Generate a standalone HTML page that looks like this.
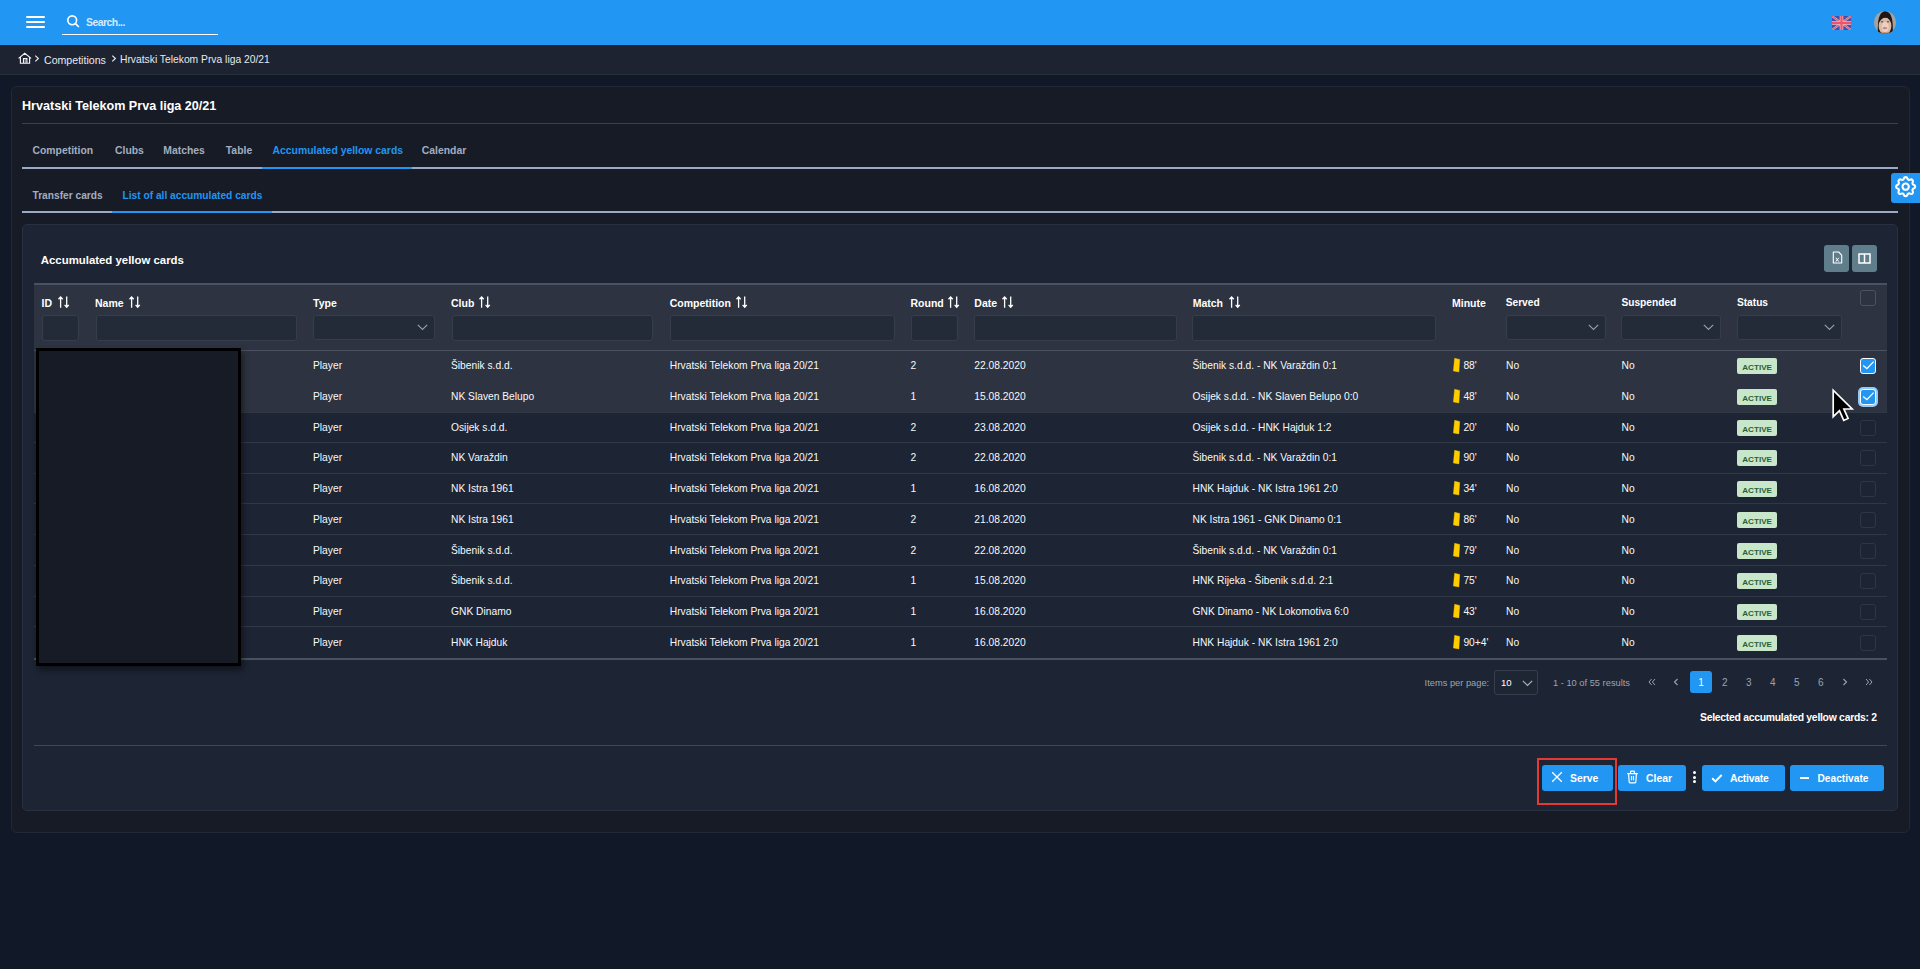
<!DOCTYPE html><html><head><meta charset="utf-8"><style>
*{box-sizing:border-box;margin:0;padding:0}
html,body{width:1920px;height:969px;overflow:hidden}
body{background:#111827;font-family:"Liberation Sans",sans-serif;color:#f1f3f6;position:relative}
.a{position:absolute}
.t{position:absolute;white-space:nowrap;line-height:1}
svg{position:absolute;overflow:visible}
</style></head><body>
<div class="a" style="left:0px;top:0px;width:1920px;height:45px;background:#2196f3"></div>
<div class="a" style="left:26px;top:16px;width:18.7px;height:2.2px;background:#fff;border-radius:1.1px"></div>
<div class="a" style="left:26px;top:21px;width:18.7px;height:2.2px;background:#fff;border-radius:1.1px"></div>
<div class="a" style="left:26px;top:26px;width:18.7px;height:2.2px;background:#fff;border-radius:1.1px"></div>
<svg style="left:66px;top:14px" width="14" height="14" viewBox="0 0 14 14"><circle cx="6.2" cy="6.3" r="4.4" fill="none" stroke="#fff" stroke-width="1.65"/><line x1="9.5" y1="9.6" x2="12.4" y2="12.5" stroke="#fff" stroke-width="1.7" stroke-linecap="round"/></svg>
<div class="t" style="left:86px;top:17.50px;font-size:10.4px;font-weight:bold;color:rgba(255,255,255,0.82);letter-spacing:-0.5px;">Search...</div>
<div class="a" style="left:62px;top:33.8px;width:156px;height:1.3px;background:#fff"></div>
<svg style="left:1832px;top:15.5px;overflow:hidden" width="19" height="14" viewBox="0 0 60 44" preserveAspectRatio="none">
<rect width="60" height="44" fill="#4350a8"/>
<path d="M0,0 L60,44 M60,0 L0,44" stroke="#d9d4e6" stroke-width="6"/>
<path d="M0,0 L60,44 M60,0 L0,44" stroke="#e5566c" stroke-width="3.5"/>
<path d="M30,0 V44 M0,22 H60" stroke="#e8e4ee" stroke-width="11"/>
<path d="M30,0 V44 M0,22 H60" stroke="#ef5466" stroke-width="7.5"/>
</svg>
<svg style="left:1874px;top:11px" width="22" height="23" viewBox="0 0 22 23">
<defs><clipPath id="av"><ellipse cx="11" cy="11.5" rx="10.9" ry="11.5"/></clipPath><filter id="bl" x="-10%" y="-10%" width="120%" height="120%"><feGaussianBlur stdDeviation="0.5"/></filter></defs>
<g clip-path="url(#av)"><g filter="url(#bl)">
<rect x="-2" y="-2" width="26" height="27" fill="#a4a29d"/>
<path d="M3.8,24 C3.6,12 4,1 11,0.2 C18,0.5 19.2,9 18.8,24 Z" fill="#1f1815"/>
<ellipse cx="11" cy="15" rx="6.4" ry="8.4" fill="#dcb9a4"/>
<ellipse cx="11.2" cy="16" rx="3.5" ry="5" fill="#ead2c2"/>
<path d="M4.6,12 C4.6,4 17.4,3.5 17.6,11.5 C16.5,9 14.5,6.2 11.5,6.6 C8.4,6.8 6.2,9.5 4.6,12 Z" fill="#1f1815"/>
<ellipse cx="8" cy="10.8" rx="1.2" ry="0.7" fill="#6a4a3a"/>
<ellipse cx="14" cy="10.8" rx="1.2" ry="0.7" fill="#6a4a3a"/>
<ellipse cx="10.9" cy="17.2" rx="2.4" ry="1.1" fill="#c98883"/>
<rect x="4" y="21.6" width="14" height="3" fill="#b0603a"/>
</g></g></svg>
<div class="a" style="left:0px;top:45px;width:1920px;height:30px;background:#1d2331;border-bottom:1px solid #262d3b"></div>
<svg style="left:14px;top:48px" width="20" height="20" viewBox="14 48 20 20"><path d="M18.6,58.4 L24.75,53.3 L31.1,58.4 M20.4,57.2 V63.2 H29.6 V57.2 M23.5,63.2 V58.6 H26.9 V63.2" fill="none" stroke="#f2f4f7" stroke-width="1.15" stroke-linejoin="miter"/><path d="M25.2,59.5 V63" stroke="#f2f4f7" stroke-width="0.7"/></svg>
<svg style="left:34px;top:54px" width="6" height="8" viewBox="0 0 6 8"><path d="M1.3,1.6 L4.4,4.5 L1.3,7.4" fill="none" stroke="#eef0f3" stroke-width="1.1"/></svg>
<div class="t" style="left:44px;top:55.03px;font-size:10.6px;font-weight:normal;color:#e6e9ee;">Competitions</div>
<svg style="left:110.5px;top:54px" width="6" height="8" viewBox="0 0 6 8"><path d="M1.3,1.6 L4.4,4.5 L1.3,7.4" fill="none" stroke="#eef0f3" stroke-width="1.1"/></svg>
<div class="t" style="left:120px;top:55.28px;font-size:10.3px;font-weight:normal;color:#e6e9ee;">Hrvatski Telekom Prva liga 20/21</div>
<div class="a" style="left:11px;top:86px;width:1899px;height:747px;background:#171b25;border:1px solid #232834;border-radius:6px"></div>
<div class="t" style="left:22px;top:100.13px;font-size:12.6px;font-weight:bold;color:#ffffff;">Hrvatski Telekom Prva liga 20/21</div>
<div class="a" style="left:22px;top:123px;width:1876px;height:1px;background:#3b414d"></div>
<div class="t" style="left:32.5px;top:145.70px;font-size:10.4px;font-weight:bold;color:#a2aec0;">Competition</div>
<div class="t" style="left:115px;top:145.70px;font-size:10.4px;font-weight:bold;color:#a2aec0;">Clubs</div>
<div class="t" style="left:163.3px;top:145.70px;font-size:10.4px;font-weight:bold;color:#a2aec0;">Matches</div>
<div class="t" style="left:225.8px;top:145.70px;font-size:10.4px;font-weight:bold;color:#a2aec0;">Table</div>
<div class="t" style="left:272.5px;top:145.70px;font-size:10.4px;font-weight:bold;color:#2196f3;">Accumulated yellow cards</div>
<div class="t" style="left:421.8px;top:145.70px;font-size:10.4px;font-weight:bold;color:#a2aec0;">Calendar</div>
<div class="a" style="left:22px;top:167px;width:1876px;height:2px;background:#9aaac4"></div>
<div class="a" style="left:262px;top:167px;width:150px;height:2px;background:#2196f3"></div>
<div class="t" style="left:32.5px;top:190.87px;font-size:10.2px;font-weight:bold;color:#a2aec0;">Transfer cards</div>
<div class="t" style="left:122.5px;top:190.87px;font-size:10.2px;font-weight:bold;color:#2196f3;">List of all accumulated cards</div>
<div class="a" style="left:22px;top:211px;width:1876px;height:2px;background:#9aaac4"></div>
<div class="a" style="left:112px;top:211px;width:160px;height:2px;background:#2196f3"></div>
<div class="a" style="left:1891px;top:173px;width:29px;height:30px;background:#2196f3;border-radius:3px 0 0 3px"></div>
<svg style="left:1893.4px;top:174.4px" width="25.3" height="25.3" viewBox="0 0 24 24"><path fill="none" stroke="#fff" stroke-width="2" stroke-linejoin="round" d="M10.3 4.3c.4-1.8 3-1.8 3.4 0a1.7 1.7 0 0 0 2.6 1.1c1.5-.9 3.3.8 2.4 2.4a1.7 1.7 0 0 0 1 2.5c1.8.4 1.8 3 0 3.4a1.7 1.7 0 0 0-1 2.6c.9 1.5-.9 3.3-2.4 2.4a1.7 1.7 0 0 0-2.6 1c-.4 1.8-3 1.8-3.4 0a1.7 1.7 0 0 0-2.5-1c-1.6.9-3.3-.9-2.4-2.4a1.7 1.7 0 0 0-1.1-2.6c-1.8-.4-1.8-3 0-3.4a1.7 1.7 0 0 0 1.1-2.5c-.9-1.6.8-3.3 2.4-2.4 1 .6 2.3.1 2.5-1.1z"/><circle cx="12" cy="12" r="3" fill="none" stroke="#fff" stroke-width="2"/></svg>
<div class="a" style="left:22px;top:224px;width:1876px;height:587px;background:#1d2433;border:1px solid #283041;border-radius:5px"></div>
<div class="t" style="left:40.8px;top:254.95px;font-size:11.4px;font-weight:bold;color:#ffffff;">Accumulated yellow cards</div>
<div class="a" style="left:1824px;top:245px;width:25px;height:27px;background:#607d8b;border-radius:3px"></div>
<div class="a" style="left:1852px;top:245px;width:25px;height:27px;background:#607d8b;border-radius:3px"></div>
<svg style="left:1831.5px;top:250.5px" width="11" height="13" viewBox="0 0 11 13"><path d="M1.3,1 H6.6 L9.7,4.1 V12 H1.3 Z" fill="none" stroke="#fff" stroke-width="1.1" stroke-linejoin="round"/><path d="M3.8,6.8 L6.8,10.6 M6.8,6.8 L3.8,10.6" stroke="#fff" stroke-width="1"/></svg>
<svg style="left:1858px;top:252.5px" width="13" height="11" viewBox="0 0 13 11"><rect x="1" y="1" width="11" height="9" fill="none" stroke="#fff" stroke-width="1.5"/><line x1="6.5" y1="1" x2="6.5" y2="10" stroke="#fff" stroke-width="1.5"/></svg>
<div class="a" style="left:34px;top:283px;width:1853px;height:2px;background:#4a5160"></div>
<div class="a" style="left:34px;top:285px;width:1853px;height:65px;background:#2d3340"></div>
<div class="a" style="left:34px;top:350px;width:1853px;height:1px;background:#4a5263"></div>
<div class="t" style="left:41.6px;top:298.11px;font-size:10.5px;font-weight:bold;color:#ffffff;">ID</div>
<svg style="left:57.5px;top:296px" width="12" height="12" viewBox="0 0 12 12"><path d="M2.6,11.8 V1 M0.5,3.3 L2.6,1 L4.7,3.3 M8.7,0.4 V11.2 M6.6,8.9 L8.7,11.2 L10.8,8.9" fill="none" stroke="#fff" stroke-width="1.3"/></svg>
<div class="t" style="left:95px;top:298.11px;font-size:10.5px;font-weight:bold;color:#ffffff;">Name</div>
<svg style="left:129px;top:296px" width="12" height="12" viewBox="0 0 12 12"><path d="M2.6,11.8 V1 M0.5,3.3 L2.6,1 L4.7,3.3 M8.7,0.4 V11.2 M6.6,8.9 L8.7,11.2 L10.8,8.9" fill="none" stroke="#fff" stroke-width="1.3"/></svg>
<div class="t" style="left:313px;top:298.11px;font-size:10.5px;font-weight:bold;color:#ffffff;">Type</div>
<div class="t" style="left:451px;top:298.11px;font-size:10.5px;font-weight:bold;color:#ffffff;">Club</div>
<svg style="left:479px;top:296px" width="12" height="12" viewBox="0 0 12 12"><path d="M2.6,11.8 V1 M0.5,3.3 L2.6,1 L4.7,3.3 M8.7,0.4 V11.2 M6.6,8.9 L8.7,11.2 L10.8,8.9" fill="none" stroke="#fff" stroke-width="1.3"/></svg>
<div class="t" style="left:669.7px;top:298.11px;font-size:10.5px;font-weight:bold;color:#ffffff;">Competition</div>
<svg style="left:736.3px;top:296px" width="12" height="12" viewBox="0 0 12 12"><path d="M2.6,11.8 V1 M0.5,3.3 L2.6,1 L4.7,3.3 M8.7,0.4 V11.2 M6.6,8.9 L8.7,11.2 L10.8,8.9" fill="none" stroke="#fff" stroke-width="1.3"/></svg>
<div class="t" style="left:910.5px;top:298.11px;font-size:10.5px;font-weight:bold;color:#ffffff;">Round</div>
<svg style="left:947.5px;top:296px" width="12" height="12" viewBox="0 0 12 12"><path d="M2.6,11.8 V1 M0.5,3.3 L2.6,1 L4.7,3.3 M8.7,0.4 V11.2 M6.6,8.9 L8.7,11.2 L10.8,8.9" fill="none" stroke="#fff" stroke-width="1.3"/></svg>
<div class="t" style="left:974.3px;top:298.11px;font-size:10.5px;font-weight:bold;color:#ffffff;">Date</div>
<svg style="left:1002.4px;top:296px" width="12" height="12" viewBox="0 0 12 12"><path d="M2.6,11.8 V1 M0.5,3.3 L2.6,1 L4.7,3.3 M8.7,0.4 V11.2 M6.6,8.9 L8.7,11.2 L10.8,8.9" fill="none" stroke="#fff" stroke-width="1.3"/></svg>
<div class="t" style="left:1192.7px;top:298.11px;font-size:10.5px;font-weight:bold;color:#ffffff;">Match</div>
<svg style="left:1229px;top:296px" width="12" height="12" viewBox="0 0 12 12"><path d="M2.6,11.8 V1 M0.5,3.3 L2.6,1 L4.7,3.3 M8.7,0.4 V11.2 M6.6,8.9 L8.7,11.2 L10.8,8.9" fill="none" stroke="#fff" stroke-width="1.3"/></svg>
<div class="t" style="left:1452px;top:298.11px;font-size:10.5px;font-weight:bold;color:#ffffff;">Minute</div>
<div class="t" style="left:1505.7px;top:298.37px;font-size:10.2px;font-weight:bold;color:#ffffff;">Served</div>
<div class="t" style="left:1621.4px;top:298.37px;font-size:10.2px;font-weight:bold;color:#ffffff;">Suspended</div>
<div class="t" style="left:1736.9px;top:298.37px;font-size:10.2px;font-weight:bold;color:#ffffff;">Status</div>
<div class="a" style="left:41.5px;top:315px;width:37.0px;height:26px;background:#232a38;border:1px solid #363d4b;border-radius:3px"></div>
<div class="a" style="left:95.5px;top:315px;width:201.0px;height:26px;background:#232a38;border:1px solid #363d4b;border-radius:3px"></div>
<div class="a" style="left:451.5px;top:315px;width:201.0px;height:26px;background:#232a38;border:1px solid #363d4b;border-radius:3px"></div>
<div class="a" style="left:669.5px;top:315px;width:225.0px;height:26px;background:#232a38;border:1px solid #363d4b;border-radius:3px"></div>
<div class="a" style="left:910.5px;top:315px;width:47.0px;height:26px;background:#232a38;border:1px solid #363d4b;border-radius:3px"></div>
<div class="a" style="left:974px;top:315px;width:203px;height:26px;background:#232a38;border:1px solid #363d4b;border-radius:3px"></div>
<div class="a" style="left:1192px;top:315px;width:244px;height:26px;background:#232a38;border:1px solid #363d4b;border-radius:3px"></div>
<div class="a" style="left:313px;top:315px;width:121.5px;height:25px;background:#232a38;border:1px solid #363d4b;border-radius:3px"></div>
<svg style="left:416.9px;top:324.2px" width="11" height="7" viewBox="0 0 11 7"><path d="M0.8,0.8 L5.5,5.5 L10.2,0.8" fill="none" stroke="#959dab" stroke-width="1.2"/></svg>
<div class="a" style="left:1506px;top:315px;width:100px;height:25px;background:#232a38;border:1px solid #363d4b;border-radius:3px"></div>
<svg style="left:1588.4px;top:324.2px" width="11" height="7" viewBox="0 0 11 7"><path d="M0.8,0.8 L5.5,5.5 L10.2,0.8" fill="none" stroke="#959dab" stroke-width="1.2"/></svg>
<div class="a" style="left:1621px;top:315px;width:100px;height:25px;background:#232a38;border:1px solid #363d4b;border-radius:3px"></div>
<svg style="left:1703.4px;top:324.2px" width="11" height="7" viewBox="0 0 11 7"><path d="M0.8,0.8 L5.5,5.5 L10.2,0.8" fill="none" stroke="#959dab" stroke-width="1.2"/></svg>
<div class="a" style="left:1737px;top:315px;width:105px;height:25px;background:#232a38;border:1px solid #363d4b;border-radius:3px"></div>
<svg style="left:1824.4px;top:324.2px" width="11" height="7" viewBox="0 0 11 7"><path d="M0.8,0.8 L5.5,5.5 L10.2,0.8" fill="none" stroke="#959dab" stroke-width="1.2"/></svg>
<div class="a" style="left:1860px;top:290px;width:16px;height:16px;border:1px solid #4a5263;border-radius:3px"></div>
<div class="a" style="left:34px;top:351px;width:1853px;height:60.7px;background:#2d3340"></div>
<div class="a" style="left:34px;top:411.5px;width:1853px;height:1px;background:#313845"></div>
<div class="a" style="left:34px;top:442px;width:1853px;height:1px;background:#313845"></div>
<div class="a" style="left:34px;top:473px;width:1853px;height:1px;background:#313845"></div>
<div class="a" style="left:34px;top:503px;width:1853px;height:1px;background:#313845"></div>
<div class="a" style="left:34px;top:534px;width:1853px;height:1px;background:#313845"></div>
<div class="a" style="left:34px;top:565px;width:1853px;height:1px;background:#313845"></div>
<div class="a" style="left:34px;top:596px;width:1853px;height:1px;background:#313845"></div>
<div class="a" style="left:34px;top:626px;width:1853px;height:1px;background:#313845"></div>
<div class="a" style="left:34px;top:657.5px;width:1853px;height:2px;background:#4a5160"></div>
<div class="t" style="left:313px;top:361.12px;font-size:10.25px;font-weight:normal;color:#f8f9fb;">Player</div>
<div class="t" style="left:451px;top:361.12px;font-size:10.25px;font-weight:normal;color:#f8f9fb;">Šibenik s.d.d.</div>
<div class="t" style="left:669.8px;top:361.12px;font-size:10.25px;font-weight:normal;color:#f8f9fb;">Hrvatski Telekom Prva liga 20/21</div>
<div class="t" style="left:910.5px;top:361.12px;font-size:10.25px;font-weight:normal;color:#f8f9fb;">2</div>
<div class="t" style="left:974.3px;top:361.12px;font-size:10.25px;font-weight:normal;color:#f8f9fb;">22.08.2020</div>
<div class="t" style="left:1192.5px;top:361.12px;font-size:10.25px;font-weight:normal;color:#f8f9fb;">Šibenik s.d.d. - NK Varaždin 0:1</div>
<svg style="left:1453px;top:358.00px" width="7" height="15" viewBox="0 0 7 15"><path d="M1.6,0.3 L6.7,1.4 L5.9,13.9 L0.4,13 Z" fill="#ffcc00" stroke="#ffcc00" stroke-width="0.4" stroke-linejoin="round"/></svg>
<div class="t" style="left:1463.4px;top:361.12px;font-size:10.25px;font-weight:normal;color:#f8f9fb;">88'</div>
<div class="t" style="left:1506px;top:361.12px;font-size:10.25px;font-weight:normal;color:#f8f9fb;">No</div>
<div class="t" style="left:1621.5px;top:361.12px;font-size:10.25px;font-weight:normal;color:#f8f9fb;">No</div>
<div class="a" style="left:1737px;top:358.00px;width:40px;height:16px;background:#c8e6c9;border-radius:2px"></div>
<div class="t" style="left:1742.2px;top:364.14px;font-size:8.1px;font-weight:bold;color:#2c5e33;letter-spacing:0.02px;">ACTIVE</div>
<div class="a" style="left:1860px;top:358.00px;width:16px;height:16px;background:#2196f3;border:1px solid #fff;border-radius:3px;"></div>
<svg style="left:1860px;top:358.00px" width="16" height="16" viewBox="0 0 16 16"><path d="M3.2,7.6 L6.9,10.6 L13.6,3.6" fill="none" stroke="#fff" stroke-width="1.3"/></svg>
<div class="t" style="left:313px;top:391.87px;font-size:10.25px;font-weight:normal;color:#f8f9fb;">Player</div>
<div class="t" style="left:451px;top:391.87px;font-size:10.25px;font-weight:normal;color:#f8f9fb;">NK Slaven Belupo</div>
<div class="t" style="left:669.8px;top:391.87px;font-size:10.25px;font-weight:normal;color:#f8f9fb;">Hrvatski Telekom Prva liga 20/21</div>
<div class="t" style="left:910.5px;top:391.87px;font-size:10.25px;font-weight:normal;color:#f8f9fb;">1</div>
<div class="t" style="left:974.3px;top:391.87px;font-size:10.25px;font-weight:normal;color:#f8f9fb;">15.08.2020</div>
<div class="t" style="left:1192.5px;top:391.87px;font-size:10.25px;font-weight:normal;color:#f8f9fb;">Osijek s.d.d. - NK Slaven Belupo 0:0</div>
<svg style="left:1453px;top:388.75px" width="7" height="15" viewBox="0 0 7 15"><path d="M1.6,0.3 L6.7,1.4 L5.9,13.9 L0.4,13 Z" fill="#ffcc00" stroke="#ffcc00" stroke-width="0.4" stroke-linejoin="round"/></svg>
<div class="t" style="left:1463.4px;top:391.87px;font-size:10.25px;font-weight:normal;color:#f8f9fb;">48'</div>
<div class="t" style="left:1506px;top:391.87px;font-size:10.25px;font-weight:normal;color:#f8f9fb;">No</div>
<div class="t" style="left:1621.5px;top:391.87px;font-size:10.25px;font-weight:normal;color:#f8f9fb;">No</div>
<div class="a" style="left:1737px;top:388.75px;width:40px;height:16px;background:#c8e6c9;border-radius:2px"></div>
<div class="t" style="left:1742.2px;top:394.89px;font-size:8.1px;font-weight:bold;color:#2c5e33;letter-spacing:0.02px;">ACTIVE</div>
<div class="a" style="left:1860px;top:388.75px;width:16px;height:16px;background:#2196f3;border:1px solid #fff;border-radius:3px;box-shadow:0 0 0 2px #90caf9;"></div>
<svg style="left:1860px;top:388.75px" width="16" height="16" viewBox="0 0 16 16"><path d="M3.2,7.6 L6.9,10.6 L13.6,3.6" fill="none" stroke="#fff" stroke-width="1.3"/></svg>
<div class="t" style="left:313px;top:422.62px;font-size:10.25px;font-weight:normal;color:#f8f9fb;">Player</div>
<div class="t" style="left:451px;top:422.62px;font-size:10.25px;font-weight:normal;color:#f8f9fb;">Osijek s.d.d.</div>
<div class="t" style="left:669.8px;top:422.62px;font-size:10.25px;font-weight:normal;color:#f8f9fb;">Hrvatski Telekom Prva liga 20/21</div>
<div class="t" style="left:910.5px;top:422.62px;font-size:10.25px;font-weight:normal;color:#f8f9fb;">2</div>
<div class="t" style="left:974.3px;top:422.62px;font-size:10.25px;font-weight:normal;color:#f8f9fb;">23.08.2020</div>
<div class="t" style="left:1192.5px;top:422.62px;font-size:10.25px;font-weight:normal;color:#f8f9fb;">Osijek s.d.d. - HNK Hajduk 1:2</div>
<svg style="left:1453px;top:419.50px" width="7" height="15" viewBox="0 0 7 15"><path d="M1.6,0.3 L6.7,1.4 L5.9,13.9 L0.4,13 Z" fill="#ffcc00" stroke="#ffcc00" stroke-width="0.4" stroke-linejoin="round"/></svg>
<div class="t" style="left:1463.4px;top:422.62px;font-size:10.25px;font-weight:normal;color:#f8f9fb;">20'</div>
<div class="t" style="left:1506px;top:422.62px;font-size:10.25px;font-weight:normal;color:#f8f9fb;">No</div>
<div class="t" style="left:1621.5px;top:422.62px;font-size:10.25px;font-weight:normal;color:#f8f9fb;">No</div>
<div class="a" style="left:1737px;top:419.50px;width:40px;height:16px;background:#c8e6c9;border-radius:2px"></div>
<div class="t" style="left:1742.2px;top:425.64px;font-size:8.1px;font-weight:bold;color:#2c5e33;letter-spacing:0.02px;">ACTIVE</div>
<div class="a" style="left:1860px;top:419.5px;width:16px;height:16px;border:1px solid #2f3644;border-radius:3px"></div>
<div class="t" style="left:313px;top:453.37px;font-size:10.25px;font-weight:normal;color:#f8f9fb;">Player</div>
<div class="t" style="left:451px;top:453.37px;font-size:10.25px;font-weight:normal;color:#f8f9fb;">NK Varaždin</div>
<div class="t" style="left:669.8px;top:453.37px;font-size:10.25px;font-weight:normal;color:#f8f9fb;">Hrvatski Telekom Prva liga 20/21</div>
<div class="t" style="left:910.5px;top:453.37px;font-size:10.25px;font-weight:normal;color:#f8f9fb;">2</div>
<div class="t" style="left:974.3px;top:453.37px;font-size:10.25px;font-weight:normal;color:#f8f9fb;">22.08.2020</div>
<div class="t" style="left:1192.5px;top:453.37px;font-size:10.25px;font-weight:normal;color:#f8f9fb;">Šibenik s.d.d. - NK Varaždin 0:1</div>
<svg style="left:1453px;top:450.25px" width="7" height="15" viewBox="0 0 7 15"><path d="M1.6,0.3 L6.7,1.4 L5.9,13.9 L0.4,13 Z" fill="#ffcc00" stroke="#ffcc00" stroke-width="0.4" stroke-linejoin="round"/></svg>
<div class="t" style="left:1463.4px;top:453.37px;font-size:10.25px;font-weight:normal;color:#f8f9fb;">90'</div>
<div class="t" style="left:1506px;top:453.37px;font-size:10.25px;font-weight:normal;color:#f8f9fb;">No</div>
<div class="t" style="left:1621.5px;top:453.37px;font-size:10.25px;font-weight:normal;color:#f8f9fb;">No</div>
<div class="a" style="left:1737px;top:450.25px;width:40px;height:16px;background:#c8e6c9;border-radius:2px"></div>
<div class="t" style="left:1742.2px;top:456.39px;font-size:8.1px;font-weight:bold;color:#2c5e33;letter-spacing:0.02px;">ACTIVE</div>
<div class="a" style="left:1860px;top:450.25px;width:16px;height:16px;border:1px solid #2f3644;border-radius:3px"></div>
<div class="t" style="left:313px;top:484.12px;font-size:10.25px;font-weight:normal;color:#f8f9fb;">Player</div>
<div class="t" style="left:451px;top:484.12px;font-size:10.25px;font-weight:normal;color:#f8f9fb;">NK Istra 1961</div>
<div class="t" style="left:669.8px;top:484.12px;font-size:10.25px;font-weight:normal;color:#f8f9fb;">Hrvatski Telekom Prva liga 20/21</div>
<div class="t" style="left:910.5px;top:484.12px;font-size:10.25px;font-weight:normal;color:#f8f9fb;">1</div>
<div class="t" style="left:974.3px;top:484.12px;font-size:10.25px;font-weight:normal;color:#f8f9fb;">16.08.2020</div>
<div class="t" style="left:1192.5px;top:484.12px;font-size:10.25px;font-weight:normal;color:#f8f9fb;">HNK Hajduk - NK Istra 1961 2:0</div>
<svg style="left:1453px;top:481.00px" width="7" height="15" viewBox="0 0 7 15"><path d="M1.6,0.3 L6.7,1.4 L5.9,13.9 L0.4,13 Z" fill="#ffcc00" stroke="#ffcc00" stroke-width="0.4" stroke-linejoin="round"/></svg>
<div class="t" style="left:1463.4px;top:484.12px;font-size:10.25px;font-weight:normal;color:#f8f9fb;">34'</div>
<div class="t" style="left:1506px;top:484.12px;font-size:10.25px;font-weight:normal;color:#f8f9fb;">No</div>
<div class="t" style="left:1621.5px;top:484.12px;font-size:10.25px;font-weight:normal;color:#f8f9fb;">No</div>
<div class="a" style="left:1737px;top:481.00px;width:40px;height:16px;background:#c8e6c9;border-radius:2px"></div>
<div class="t" style="left:1742.2px;top:487.14px;font-size:8.1px;font-weight:bold;color:#2c5e33;letter-spacing:0.02px;">ACTIVE</div>
<div class="a" style="left:1860px;top:481.0px;width:16px;height:16px;border:1px solid #2f3644;border-radius:3px"></div>
<div class="t" style="left:313px;top:514.87px;font-size:10.25px;font-weight:normal;color:#f8f9fb;">Player</div>
<div class="t" style="left:451px;top:514.87px;font-size:10.25px;font-weight:normal;color:#f8f9fb;">NK Istra 1961</div>
<div class="t" style="left:669.8px;top:514.87px;font-size:10.25px;font-weight:normal;color:#f8f9fb;">Hrvatski Telekom Prva liga 20/21</div>
<div class="t" style="left:910.5px;top:514.87px;font-size:10.25px;font-weight:normal;color:#f8f9fb;">2</div>
<div class="t" style="left:974.3px;top:514.87px;font-size:10.25px;font-weight:normal;color:#f8f9fb;">21.08.2020</div>
<div class="t" style="left:1192.5px;top:514.87px;font-size:10.25px;font-weight:normal;color:#f8f9fb;">NK Istra 1961 - GNK Dinamo 0:1</div>
<svg style="left:1453px;top:511.75px" width="7" height="15" viewBox="0 0 7 15"><path d="M1.6,0.3 L6.7,1.4 L5.9,13.9 L0.4,13 Z" fill="#ffcc00" stroke="#ffcc00" stroke-width="0.4" stroke-linejoin="round"/></svg>
<div class="t" style="left:1463.4px;top:514.87px;font-size:10.25px;font-weight:normal;color:#f8f9fb;">86'</div>
<div class="t" style="left:1506px;top:514.87px;font-size:10.25px;font-weight:normal;color:#f8f9fb;">No</div>
<div class="t" style="left:1621.5px;top:514.87px;font-size:10.25px;font-weight:normal;color:#f8f9fb;">No</div>
<div class="a" style="left:1737px;top:511.75px;width:40px;height:16px;background:#c8e6c9;border-radius:2px"></div>
<div class="t" style="left:1742.2px;top:517.89px;font-size:8.1px;font-weight:bold;color:#2c5e33;letter-spacing:0.02px;">ACTIVE</div>
<div class="a" style="left:1860px;top:511.75px;width:16px;height:16px;border:1px solid #2f3644;border-radius:3px"></div>
<div class="t" style="left:313px;top:545.62px;font-size:10.25px;font-weight:normal;color:#f8f9fb;">Player</div>
<div class="t" style="left:451px;top:545.62px;font-size:10.25px;font-weight:normal;color:#f8f9fb;">Šibenik s.d.d.</div>
<div class="t" style="left:669.8px;top:545.62px;font-size:10.25px;font-weight:normal;color:#f8f9fb;">Hrvatski Telekom Prva liga 20/21</div>
<div class="t" style="left:910.5px;top:545.62px;font-size:10.25px;font-weight:normal;color:#f8f9fb;">2</div>
<div class="t" style="left:974.3px;top:545.62px;font-size:10.25px;font-weight:normal;color:#f8f9fb;">22.08.2020</div>
<div class="t" style="left:1192.5px;top:545.62px;font-size:10.25px;font-weight:normal;color:#f8f9fb;">Šibenik s.d.d. - NK Varaždin 0:1</div>
<svg style="left:1453px;top:542.50px" width="7" height="15" viewBox="0 0 7 15"><path d="M1.6,0.3 L6.7,1.4 L5.9,13.9 L0.4,13 Z" fill="#ffcc00" stroke="#ffcc00" stroke-width="0.4" stroke-linejoin="round"/></svg>
<div class="t" style="left:1463.4px;top:545.62px;font-size:10.25px;font-weight:normal;color:#f8f9fb;">79'</div>
<div class="t" style="left:1506px;top:545.62px;font-size:10.25px;font-weight:normal;color:#f8f9fb;">No</div>
<div class="t" style="left:1621.5px;top:545.62px;font-size:10.25px;font-weight:normal;color:#f8f9fb;">No</div>
<div class="a" style="left:1737px;top:542.50px;width:40px;height:16px;background:#c8e6c9;border-radius:2px"></div>
<div class="t" style="left:1742.2px;top:548.64px;font-size:8.1px;font-weight:bold;color:#2c5e33;letter-spacing:0.02px;">ACTIVE</div>
<div class="a" style="left:1860px;top:542.5px;width:16px;height:16px;border:1px solid #2f3644;border-radius:3px"></div>
<div class="t" style="left:313px;top:576.37px;font-size:10.25px;font-weight:normal;color:#f8f9fb;">Player</div>
<div class="t" style="left:451px;top:576.37px;font-size:10.25px;font-weight:normal;color:#f8f9fb;">Šibenik s.d.d.</div>
<div class="t" style="left:669.8px;top:576.37px;font-size:10.25px;font-weight:normal;color:#f8f9fb;">Hrvatski Telekom Prva liga 20/21</div>
<div class="t" style="left:910.5px;top:576.37px;font-size:10.25px;font-weight:normal;color:#f8f9fb;">1</div>
<div class="t" style="left:974.3px;top:576.37px;font-size:10.25px;font-weight:normal;color:#f8f9fb;">15.08.2020</div>
<div class="t" style="left:1192.5px;top:576.37px;font-size:10.25px;font-weight:normal;color:#f8f9fb;">HNK Rijeka - Šibenik s.d.d. 2:1</div>
<svg style="left:1453px;top:573.25px" width="7" height="15" viewBox="0 0 7 15"><path d="M1.6,0.3 L6.7,1.4 L5.9,13.9 L0.4,13 Z" fill="#ffcc00" stroke="#ffcc00" stroke-width="0.4" stroke-linejoin="round"/></svg>
<div class="t" style="left:1463.4px;top:576.37px;font-size:10.25px;font-weight:normal;color:#f8f9fb;">75'</div>
<div class="t" style="left:1506px;top:576.37px;font-size:10.25px;font-weight:normal;color:#f8f9fb;">No</div>
<div class="t" style="left:1621.5px;top:576.37px;font-size:10.25px;font-weight:normal;color:#f8f9fb;">No</div>
<div class="a" style="left:1737px;top:573.25px;width:40px;height:16px;background:#c8e6c9;border-radius:2px"></div>
<div class="t" style="left:1742.2px;top:579.39px;font-size:8.1px;font-weight:bold;color:#2c5e33;letter-spacing:0.02px;">ACTIVE</div>
<div class="a" style="left:1860px;top:573.25px;width:16px;height:16px;border:1px solid #2f3644;border-radius:3px"></div>
<div class="t" style="left:313px;top:607.12px;font-size:10.25px;font-weight:normal;color:#f8f9fb;">Player</div>
<div class="t" style="left:451px;top:607.12px;font-size:10.25px;font-weight:normal;color:#f8f9fb;">GNK Dinamo</div>
<div class="t" style="left:669.8px;top:607.12px;font-size:10.25px;font-weight:normal;color:#f8f9fb;">Hrvatski Telekom Prva liga 20/21</div>
<div class="t" style="left:910.5px;top:607.12px;font-size:10.25px;font-weight:normal;color:#f8f9fb;">1</div>
<div class="t" style="left:974.3px;top:607.12px;font-size:10.25px;font-weight:normal;color:#f8f9fb;">16.08.2020</div>
<div class="t" style="left:1192.5px;top:607.12px;font-size:10.25px;font-weight:normal;color:#f8f9fb;">GNK Dinamo - NK Lokomotiva 6:0</div>
<svg style="left:1453px;top:604.00px" width="7" height="15" viewBox="0 0 7 15"><path d="M1.6,0.3 L6.7,1.4 L5.9,13.9 L0.4,13 Z" fill="#ffcc00" stroke="#ffcc00" stroke-width="0.4" stroke-linejoin="round"/></svg>
<div class="t" style="left:1463.4px;top:607.12px;font-size:10.25px;font-weight:normal;color:#f8f9fb;">43'</div>
<div class="t" style="left:1506px;top:607.12px;font-size:10.25px;font-weight:normal;color:#f8f9fb;">No</div>
<div class="t" style="left:1621.5px;top:607.12px;font-size:10.25px;font-weight:normal;color:#f8f9fb;">No</div>
<div class="a" style="left:1737px;top:604.00px;width:40px;height:16px;background:#c8e6c9;border-radius:2px"></div>
<div class="t" style="left:1742.2px;top:610.14px;font-size:8.1px;font-weight:bold;color:#2c5e33;letter-spacing:0.02px;">ACTIVE</div>
<div class="a" style="left:1860px;top:604.0px;width:16px;height:16px;border:1px solid #2f3644;border-radius:3px"></div>
<div class="t" style="left:313px;top:637.87px;font-size:10.25px;font-weight:normal;color:#f8f9fb;">Player</div>
<div class="t" style="left:451px;top:637.87px;font-size:10.25px;font-weight:normal;color:#f8f9fb;">HNK Hajduk</div>
<div class="t" style="left:669.8px;top:637.87px;font-size:10.25px;font-weight:normal;color:#f8f9fb;">Hrvatski Telekom Prva liga 20/21</div>
<div class="t" style="left:910.5px;top:637.87px;font-size:10.25px;font-weight:normal;color:#f8f9fb;">1</div>
<div class="t" style="left:974.3px;top:637.87px;font-size:10.25px;font-weight:normal;color:#f8f9fb;">16.08.2020</div>
<div class="t" style="left:1192.5px;top:637.87px;font-size:10.25px;font-weight:normal;color:#f8f9fb;">HNK Hajduk - NK Istra 1961 2:0</div>
<svg style="left:1453px;top:634.75px" width="7" height="15" viewBox="0 0 7 15"><path d="M1.6,0.3 L6.7,1.4 L5.9,13.9 L0.4,13 Z" fill="#ffcc00" stroke="#ffcc00" stroke-width="0.4" stroke-linejoin="round"/></svg>
<div class="t" style="left:1463.4px;top:637.87px;font-size:10.25px;font-weight:normal;color:#f8f9fb;">90+4'</div>
<div class="t" style="left:1506px;top:637.87px;font-size:10.25px;font-weight:normal;color:#f8f9fb;">No</div>
<div class="t" style="left:1621.5px;top:637.87px;font-size:10.25px;font-weight:normal;color:#f8f9fb;">No</div>
<div class="a" style="left:1737px;top:634.75px;width:40px;height:16px;background:#c8e6c9;border-radius:2px"></div>
<div class="t" style="left:1742.2px;top:640.89px;font-size:8.1px;font-weight:bold;color:#2c5e33;letter-spacing:0.02px;">ACTIVE</div>
<div class="a" style="left:1860px;top:634.75px;width:16px;height:16px;border:1px solid #2f3644;border-radius:3px"></div>
<div class="a" style="left:36px;top:348px;width:205px;height:318px;background:#171b25;border:3px solid #000;box-shadow:2px 4px 6px rgba(0,0,0,0.45)"></div>
<div class="t" style="left:1424.6px;top:679.13px;font-size:9.3px;font-weight:normal;color:#9aa4b4;">Items per page:</div>
<div class="a" style="left:1494px;top:670px;width:44px;height:25px;background:#1f2633;border:1px solid #363d4b;border-radius:3px"></div>
<div class="t" style="left:1501px;top:677.87px;font-size:9.6px;font-weight:normal;color:#ffffff;">10</div>
<svg style="left:1521.5px;top:679.5px" width="11" height="7" viewBox="0 0 11 7"><path d="M0.8,0.8 L5.5,5.5 L10.2,0.8" fill="none" stroke="#aab2bf" stroke-width="1.2"/></svg>
<div class="t" style="left:1553px;top:679.13px;font-size:9.3px;font-weight:normal;color:#9aa4b4;">1 - 10 of 55 results</div>
<svg style="left:1648px;top:678px" width="8" height="8" viewBox="0 0 8 8"><path d="M3.6,1 L1,4 L3.6,7 M7,1 L4.4,4 L7,7" fill="none" stroke="#9aa4b4" stroke-width="1"/></svg>
<svg style="left:1673px;top:678px" width="6" height="8" viewBox="0 0 6 8"><path d="M4.5,1 L1.5,4 L4.5,7" fill="none" stroke="#9aa4b4" stroke-width="1.1"/></svg>
<div class="a" style="left:1690px;top:671px;width:22px;height:22px;background:#2196f3;border-radius:3px"></div>
<div class="t" style="left:1698.3px;top:677.83px;font-size:10px;font-weight:normal;color:#ffffff;">1</div>
<div class="t" style="left:1722.1px;top:677.83px;font-size:10px;font-weight:normal;color:#9aa4b4;">2</div>
<div class="t" style="left:1746.1px;top:677.83px;font-size:10px;font-weight:normal;color:#9aa4b4;">3</div>
<div class="t" style="left:1770.1px;top:677.83px;font-size:10px;font-weight:normal;color:#9aa4b4;">4</div>
<div class="t" style="left:1794.1px;top:677.83px;font-size:10px;font-weight:normal;color:#9aa4b4;">5</div>
<div class="t" style="left:1818.1px;top:677.83px;font-size:10px;font-weight:normal;color:#9aa4b4;">6</div>
<svg style="left:1842px;top:678px" width="6" height="8" viewBox="0 0 6 8"><path d="M1.5,1 L4.5,4 L1.5,7" fill="none" stroke="#9aa4b4" stroke-width="1.1"/></svg>
<svg style="left:1865px;top:678px" width="8" height="8" viewBox="0 0 8 8"><path d="M1,1 L3.6,4 L1,7 M4.4,1 L7,4 L4.4,7" fill="none" stroke="#9aa4b4" stroke-width="1"/></svg>
<div class="t" style="left:1700px;top:712.50px;font-size:10.4px;font-weight:bold;color:#ffffff;letter-spacing:-0.27px;">Selected accumulated yellow cards: 2</div>
<div class="a" style="left:34px;top:745px;width:1853px;height:1px;background:#404755"></div>
<div class="a" style="left:1542px;top:765px;width:71px;height:26px;background:#2196f3;border-radius:3px"></div>
<div class="a" style="left:1618px;top:765px;width:68px;height:26px;background:#2196f3;border-radius:3px"></div>
<div class="a" style="left:1702px;top:765px;width:83px;height:26px;background:#2196f3;border-radius:3px"></div>
<div class="a" style="left:1790px;top:765px;width:94px;height:26px;background:#2196f3;border-radius:3px"></div>
<svg style="left:1551px;top:771.2px" width="12" height="12" viewBox="0 0 12 12"><path d="M1.2,1.2 L10.8,10.8 M10.8,1.2 L1.2,10.8" stroke="#fff" stroke-width="1.3"/></svg>
<div class="t" style="left:1570px;top:773.50px;font-size:10.4px;font-weight:bold;color:#fff;">Serve</div>
<svg style="left:1626px;top:770px" width="13" height="14" viewBox="0 0 13 14"><path d="M1.2,3.6 H11.8 M4.6,3.4 V1.8 Q4.6,1.2 5.2,1.2 H7.8 Q8.4,1.2 8.4,1.8 V3.4 M2.6,3.6 L3.2,12.2 Q3.3,12.8 3.9,12.8 H9.1 Q9.7,12.8 9.8,12.2 L10.4,3.6 M5.5,6 V10.2 M7.5,6 V10.2" fill="none" stroke="#fff" stroke-width="1.2"/></svg>
<div class="t" style="left:1646px;top:773.50px;font-size:10.4px;font-weight:bold;color:#fff;">Clear</div>
<div class="a" style="left:1693px;top:771.1px;width:3px;height:3px;background:#fff;border-radius:50%"></div>
<div class="a" style="left:1693px;top:775.7px;width:3px;height:3px;background:#fff;border-radius:50%"></div>
<div class="a" style="left:1693px;top:780.2px;width:3px;height:3px;background:#fff;border-radius:50%"></div>
<svg style="left:1711px;top:772px" width="12" height="12" viewBox="0 0 12 12"><path d="M1.2,6.3 L4.4,9.4 L10.6,3" fill="none" stroke="#fff" stroke-width="2"/></svg>
<div class="t" style="left:1730px;top:773.50px;font-size:10.4px;font-weight:bold;color:#fff;letter-spacing:-0.25px;">Activate</div>
<div class="a" style="left:1800px;top:776.5px;width:8.7px;height:2.5px;background:#fff"></div>
<div class="t" style="left:1817.5px;top:773.67px;font-size:10.2px;font-weight:bold;color:#fff;">Deactivate</div>
<div class="a" style="left:1537px;top:758px;width:80px;height:47px;border:2px solid #e53935"></div>
<svg style="left:1830.1px;top:387.4px" width="30" height="42" viewBox="0 0 30 42"><path d="M3.2,3.2 L3.2,29.7 L9.46,23.7 L13.7,33.4 L18.1,31.4 L13.9,22 L22.15,22 Z" fill="#000" stroke="#fff" stroke-width="1.7" stroke-linejoin="miter"/></svg>
</body></html>
